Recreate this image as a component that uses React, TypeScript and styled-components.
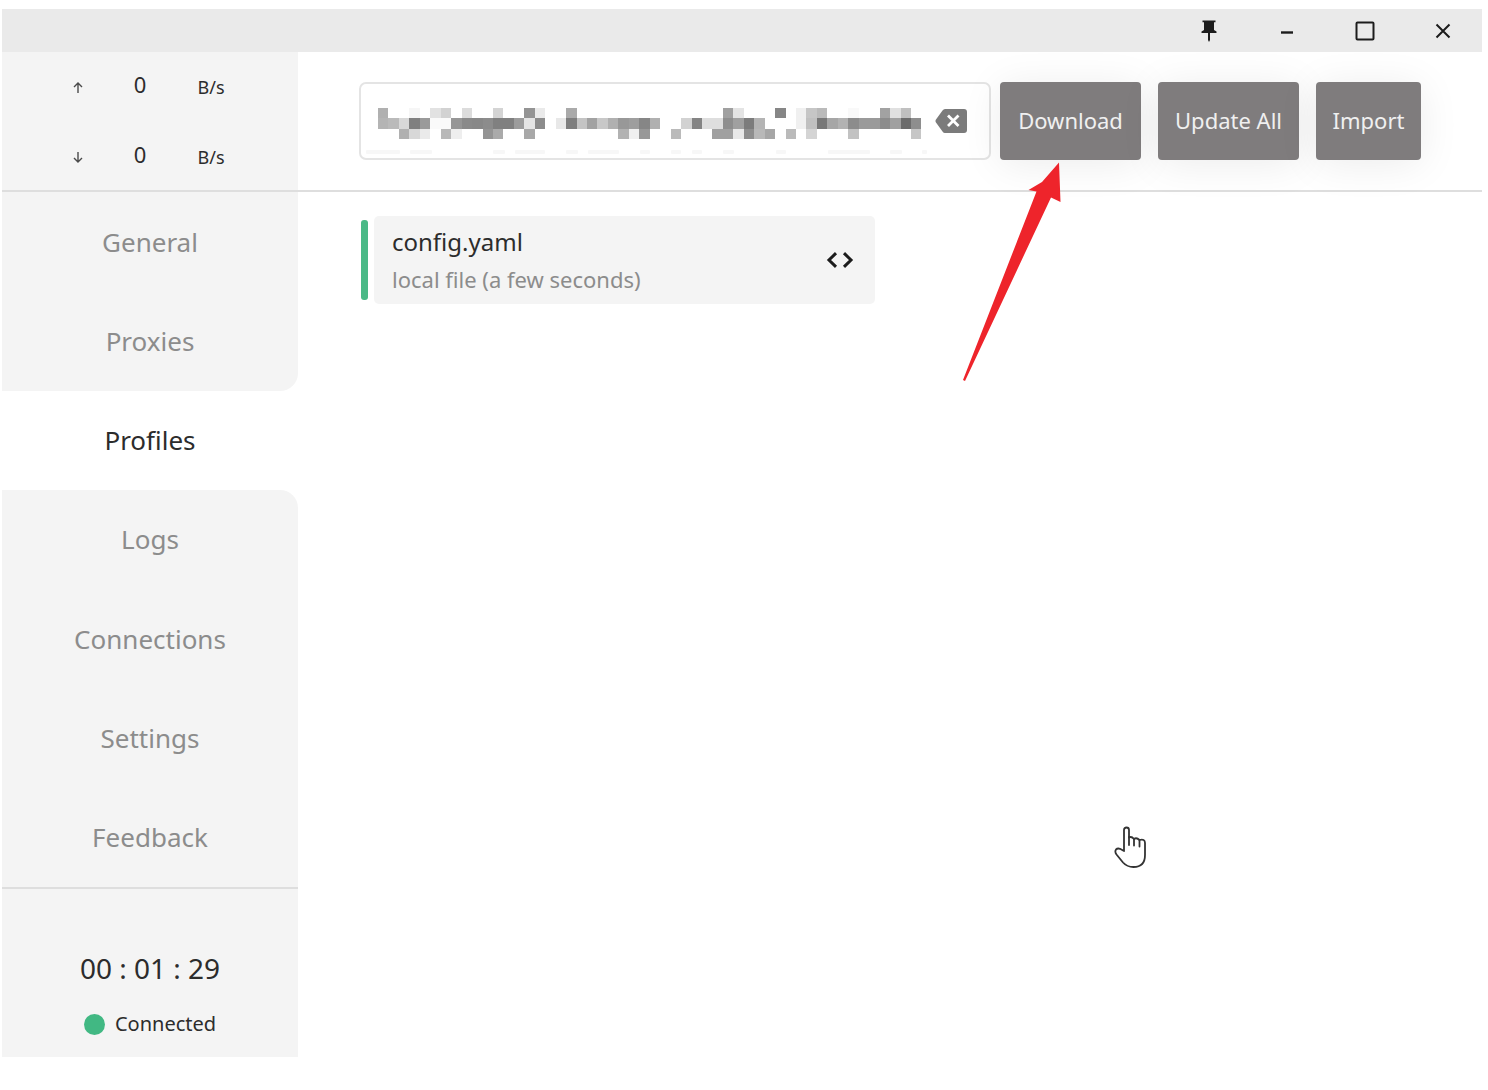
import React, { useState } from "react";
import styled, { createGlobalStyle } from "styled-components";

const GlobalStyle = createGlobalStyle`
  *, *::before, *::after { box-sizing: border-box; }
  body {
    margin: 0;
    background: #ffffff;
    color: #2c2c2c;
    font-family: "Noto Sans", "Open Sans", sans-serif;
  }
  button, input { font: inherit; color: inherit; }
  button { border: 0; padding: 0; background: none; cursor: pointer; }
`;

const Window = styled.div`
  display: flex;
  flex-direction: column;
  min-height: 100vh;
  padding: 9px 6px 33px 2px;
`;

const TitleBar = styled.header`
  display: flex;
  justify-content: flex-end;
  height: 43px;
  background: #eaeaea;
`;

const WindowButton = styled.button`
  display: flex;
  align-items: center;
  justify-content: center;
  width: 78px;
  color: #1c1c1c;
`;

const Body = styled.div`
  display: grid;
  grid-template-columns: 20% 1fr;
  flex: 1;
`;

const Sidebar = styled.aside`
  display: flex;
  flex-direction: column;
`;

const Traffic = styled.div`
  height: 140px;
  background: #f4f4f4;
  border-bottom: 2px solid #dedede;
`;

const TrafficRow = styled.div`
  display: grid;
  grid-template-columns: 62px 62px 80px;
  justify-content: center;
  align-items: center;
  justify-items: center;
  height: 70px;
  padding-right: 2px;
  line-height: 24px;
`;

const Rate = styled.span`
  font-size: 22px;
  padding-bottom: 6px;
`;

const Unit = styled.span`
  font-size: 18px;
`;

const Nav = styled.nav`
  display: flex;
  flex-direction: column;
  flex: 1;
`;

const NavLink = styled.a<{ $state: "active" | "before" | "after" | "plain" }>`
  display: flex;
  align-items: center;
  justify-content: center;
  flex: 1;
  font-size: 26px;
  line-height: 36px;
  text-decoration: none;
  color: ${(p) => (p.$state === "active" ? "#2c2c2c" : "#8c8c8c")};
  background: ${(p) => (p.$state === "active" ? "#ffffff" : "#f4f4f4")};
  border-radius: ${(p) =>
    p.$state === "before" ? "0 0 18px 0" : p.$state === "after" ? "0 18px 0 0" : "0"};
`;

const Status = styled.div`
  display: flex;
  flex-direction: column;
  align-items: center;
  gap: 24px;
  height: 170px;
  padding-top: 61px;
  background: #f4f4f4;
  border-top: 2px solid #dedede;
`;

const Timer = styled.time`
  font-size: 28px;
  line-height: 36px;
`;

const Connection = styled.div`
  display: flex;
  align-items: center;
  gap: 10px;
  font-size: 20px;
  line-height: 28px;
`;

const Dot = styled.span`
  width: 21px;
  height: 21px;
  border-radius: 50%;
  background: #41b883;
`;

const Main = styled.main`
  position: relative;
  display: flex;
  flex-direction: column;
`;

const Toolbar = styled.form`
  display: flex;
  gap: 17px;
  height: 140px;
  padding: 30px 61px 0;
  border-bottom: 2px solid #dedede;
`;

const Field = styled.div`
  position: relative;
  display: flex;
  align-items: center;
  flex: 1;
  height: 78px;
  margin-right: -8px;
  padding: 0 22px 0 16px;
  border: 2px solid #e4e4e4;
  border-radius: 7px;
  background: #ffffff;
`;

const UrlInput = styled.input`
  flex: 1;
  min-width: 0;
  height: 48px;
  border: 0;
  outline: 0;
  background: transparent;
  font-size: 22px;
`;

const Mosaic = styled.svg`
  position: absolute;
  left: 5px;
  top: 24px;
  pointer-events: none;
`;

const ClearButton = styled.button`
  display: flex;
`;

const Action = styled.div`
  position: relative;
  height: 78px;
`;

const ActionButton = styled.button<{ $wide?: boolean }>`
  width: ${(p) => (p.$wide ? "141px" : "105px")};
  height: 78px;
  padding-bottom: 2px;
  border-radius: 4px;
  background: #7f7c7d;
  color: #f0f0f0;
  font-size: 22px;
  line-height: 30px;
  white-space: nowrap;
  box-shadow: 0 4px 40px rgba(0, 0, 0, 0.08);
`;

const Pointer = styled.svg`
  position: absolute;
  left: -38px;
  top: 78px;
  z-index: 2;
  pointer-events: none;
`;

const Profiles = styled.section`
  display: grid;
  grid-template-columns: 1fr 1fr;
  gap: 30px;
  padding: 24px 61px;
`;

const Profile = styled.article`
  display: flex;
  align-items: center;
  gap: 6px;
  padding-left: 2px;
`;

const Marker = styled.span`
  width: 7px;
  height: 80px;
  border-radius: 3px;
  background: #4ab986;
`;

const Card = styled.div`
  display: flex;
  align-items: center;
  justify-content: space-between;
  flex: 1;
  height: 88px;
  padding: 0 21px 0 18px;
  border-radius: 5px;
  background: #f4f4f4;
`;

const CardTitle = styled.h2`
  margin: 0;
  font-size: 24px;
  font-weight: 400;
  line-height: 38px;
`;

const CardNote = styled.p`
  margin: 0;
  font-size: 22px;
  line-height: 36px;
  color: #8c8c8c;
`;

const EditButton = styled.button`
  display: flex;
  color: #1c1c1c;
`;

const Hand = styled.svg`
  position: absolute;
  right: 334px;
  bottom: 188px;
`;

const NAV = ["General", "Proxies", "Profiles", "Logs", "Connections", "Settings", "Feedback"];

// [column, grey level] for each masked block, one list per row
const BLOCKS: [number, number][][] = [
  [
    [0, 176], [3, 246], [5, 226], [6, 210], [8, 220], [11, 212], [14, 148], [15, 234],
    [18, 170], [33, 160], [34, 228], [38, 134], [40, 240], [41, 198], [42, 186],
    [45, 249], [48, 162], [49, 224], [50, 192],
  ],
  [
    [0, 180], [1, 186], [2, 216], [3, 128], [4, 154], [5, 250], [6, 250], [7, 150],
    [8, 138], [9, 136], [10, 140], [11, 128], [12, 128], [13, 156], [14, 228], [15, 140],
    [17, 232], [18, 126], [19, 196], [20, 162], [21, 200], [22, 176], [23, 152],
    [24, 158], [25, 134], [26, 176], [29, 210], [30, 132], [31, 222], [32, 222],
    [33, 142], [34, 160], [35, 124], [36, 180], [40, 240], [41, 192], [42, 120],
    [43, 166], [44, 178], [45, 140], [46, 154], [47, 154], [48, 140], [49, 160],
    [50, 108], [51, 142],
  ],
  [
    [2, 176], [3, 216], [4, 234], [6, 184], [7, 238], [10, 148], [11, 170], [14, 168],
    [23, 178], [24, 240], [25, 152], [28, 186], [32, 160], [33, 160], [34, 232],
    [35, 142], [36, 184], [37, 166], [39, 186], [41, 212], [45, 194], [51, 198],
  ],
];

const SMUDGES: [number, number][] = [
  [0, 34], [44, 22], [127, 12], [149, 30], [200, 12], [222, 31], [274, 10], [305, 10],
  [326, 10], [357, 11], [410, 10], [462, 42], [524, 12], [556, 5],
];

function MaskedUrl() {
  return (
    <Mosaic width="562" height="48" aria-hidden="true">
      <g shapeRendering="crispEdges">
        {BLOCKS.map((row, y) =>
          row.map(([col, grey]) => {
            const x0 = Math.round(12 + col * 10.45);
            const x1 = Math.round(12 + (col + 1) * 10.45);
            const y0 = Math.round(y * 10.45);
            const y1 = Math.round((y + 1) * 10.45);
            return (
              <rect
                key={`${y}-${col}`}
                x={x0}
                y={y0}
                width={x1 - x0}
                height={y1 - y0}
                fill={`rgb(${grey},${grey},${grey})`}
              />
            );
          })
        )}
      </g>
      {SMUDGES.map(([x, w]) => (
        <rect key={x} x={x} y="42" width={w} height="4" rx="1" fill="#f7f7f7" />
      ))}
    </Mosaic>
  );
}

function Arrow({ down }: { down?: boolean }) {
  return (
    <svg width="10" height="11" viewBox="0 0 10 11" fill="none" stroke="#4a4a4a" strokeWidth="1.4">
      {down ? <path d="M5 0V10M1 6L5 10L9 6" /> : <path d="M5 11V1M1 5L5 1L9 5" />}
    </svg>
  );
}

export default function App() {
  const [url, setUrl] = useState("");
  const active = NAV.indexOf("Profiles");
  const stateOf = (i: number) =>
    i === active ? "active" : i === active - 1 ? "before" : i === active + 1 ? "after" : "plain";

  return (
    <>
      <GlobalStyle />
      <Window>
        <TitleBar>
          <WindowButton aria-label="Pin">
            <svg width="16" height="22" viewBox="0 0 16 22" fill="currentColor">
              <path d="M1.500 0.500H14.500V2.200H13V10L15.500 11.500V13H9V20L8 22L7 20V13H0.500V11.500L3 10V2.200H1.500Z" />
            </svg>
          </WindowButton>
          <WindowButton aria-label="Minimize">
            <svg width="14" height="14" viewBox="0 0 14 14" stroke="currentColor" strokeWidth="2.4">
              <path d="M1 8.500H13" />
            </svg>
          </WindowButton>
          <WindowButton aria-label="Maximize">
            <svg width="20" height="20" viewBox="0 0 20 20" fill="none" stroke="currentColor" strokeWidth="2">
              <rect x="1.5" y="1.5" width="17" height="17" rx="1" />
            </svg>
          </WindowButton>
          <WindowButton aria-label="Close">
            <svg width="16" height="16" viewBox="0 0 16 16" stroke="currentColor" strokeWidth="2">
              <path d="M1.5 1.5L14.5 14.5M14.5 1.5L1.5 14.5" />
            </svg>
          </WindowButton>
        </TitleBar>

        <Body>
          <Sidebar>
            <Traffic>
              <TrafficRow>
                <Arrow />
                <Rate>0</Rate>
                <Unit>B/s</Unit>
              </TrafficRow>
              <TrafficRow>
                <Arrow down />
                <Rate>0</Rate>
                <Unit>B/s</Unit>
              </TrafficRow>
            </Traffic>
            <Nav>
              {NAV.map((label, i) => (
                <NavLink key={label} href={`#${label.toLowerCase()}`} $state={stateOf(i)}>
                  {label}
                </NavLink>
              ))}
            </Nav>
            <Status>
              <Timer>00 : 01 : 29</Timer>
              <Connection>
                <Dot />
                Connected
              </Connection>
            </Status>
          </Sidebar>

          <Main>
            <Toolbar onSubmit={(e) => e.preventDefault()}>
              <Field>
                <UrlInput
                  aria-label="Profile URL"
                  value={url}
                  onChange={(e) => setUrl(e.target.value)}
                />
                {url === "" && <MaskedUrl />}
                <ClearButton type="button" aria-label="Clear" onClick={() => setUrl("")}>
                  <svg width="32" height="24" viewBox="0 0 32 24">
                    <path d="M10 0H29Q32 0 32 3V21Q32 24 29 24H10Q8.500 24 7.500 22.500L0.800 13.200Q0 12 0.800 10.800L7.500 1.500Q8.500 0 10 0Z" fill="#7b7b7b" />
                    <path d="M13 6.500L23.500 17M23.500 6.500L13 17" stroke="#ffffff" strokeWidth="2.800" />
                  </svg>
                </ClearButton>
              </Field>
              <Action>
                <ActionButton type="submit" $wide>Download</ActionButton>
                <Pointer width="102" height="222" viewBox="0 0 102 222" aria-hidden="true">
                  <path d="M97 2.500L98.500 42L89 37.500L3 221L1 220L74.500 31.500L66.500 30L80 22Z" fill="#ee242b" />
                </Pointer>
              </Action>
              <Action>
                <ActionButton type="button" $wide>Update All</ActionButton>
              </Action>
              <Action>
                <ActionButton type="button">Import</ActionButton>
              </Action>
            </Toolbar>

            <Profiles>
              <Profile>
                <Marker />
                <Card>
                  <div>
                    <CardTitle>config.yaml</CardTitle>
                    <CardNote>local file (a few seconds)</CardNote>
                  </div>
                  <EditButton aria-label="Edit profile">
                    <svg width="28" height="16" viewBox="0 0 28 16" fill="none" stroke="currentColor" strokeWidth="3">
                      <path d="M10 1.200L3 8L10 14.800M18 1.200L25 8L18 14.800" />
                    </svg>
                  </EditButton>
                </Card>
              </Profile>
            </Profiles>

            <Hand width="34" height="43" viewBox="0 0 34 43" fill="#ffffff" stroke="#333333" strokeWidth="1.8" strokeLinejoin="round" strokeLinecap="round" aria-hidden="true">
              <path d="M10 25V4Q10 1.500 12.500 1.500Q15 1.500 15 4V11.500Q17.500 10 20 13Q22.500 11 25.500 14Q31 12.500 31 17V29Q31 41 19.500 41Q13 41 9 36.500L2.500 28.500Q0.500 25.500 2 23.500Q3.500 22 6 22.800L10 25Z" />
              <path d="M15 11V19M20 13V19.500M25.500 14V20.500" fill="none" />
            </Hand>
          </Main>
        </Body>
      </Window>
    </>
  );
}
